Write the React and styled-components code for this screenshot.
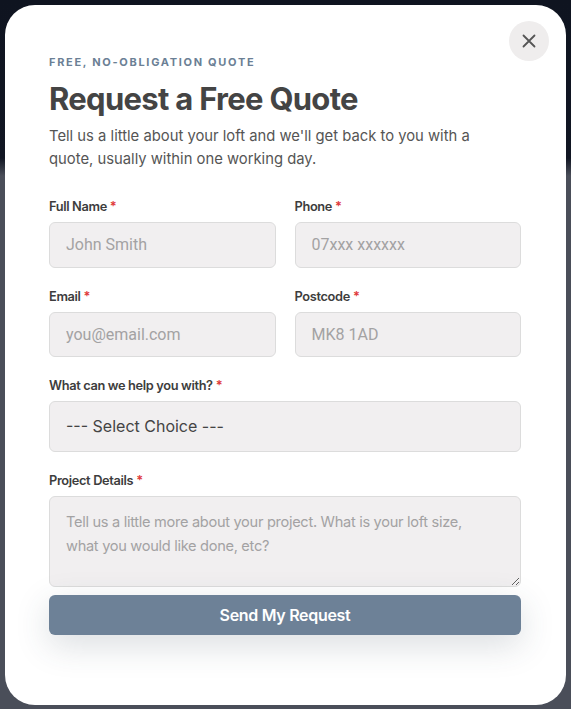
import React from "react";
import styled, { createGlobalStyle } from "styled-components";

const GlobalStyle = createGlobalStyle`
  html, body {
    margin: 0;
    height: 100%;
  }
  body {
    font-family: Inter, "Liberation Sans", sans-serif;
    background: linear-gradient(
      to bottom,
      #0f1420 0,
      #111623 158px,
      #4a4e59 176px,
      #4a4e59 100%
    );
  }
  * { box-sizing: border-box; }
`;

const Overlay = styled.div`
  height: 709px;
  display: flex;
  align-items: center;
  justify-content: center;
`;

const Modal = styled.div`
  position: relative;
  width: 561px;
  height: 700px;
  background: #fff;
  border-radius: 30px;
  padding: 50px 45px 0 44px;
  display: flex;
  flex-direction: column;
  overflow: hidden;
`;

const CloseButton = styled.button`
  position: absolute;
  top: 16px;
  right: 17px;
  width: 40px;
  height: 40px;
  border-radius: 50%;
  border: none;
  background: #efeded;
  display: flex;
  align-items: center;
  justify-content: center;
  padding: 0;
  cursor: pointer;
`;

const Eyebrow = styled.p`
  margin: 0;
  font-size: 11px;
  font-weight: 700;
  letter-spacing: 1.7px;
  color: #6b7f95;
  text-transform: uppercase;
  line-height: 14px;
`;

const Title = styled.h2`
  margin: 11px 0 0;
  font-size: 31px;
  font-weight: 700;
  letter-spacing: -0.7px;
  color: #444;
  line-height: 38px;
`;

const Intro = styled.p`
  margin: 7px 0 0;
  font-size: 14.8px;
  line-height: 23px;
  color: #555;
  max-width: 440px;
`;

const Form = styled.form`
  margin-top: 29px;
  display: flex;
  flex-direction: column;
  gap: 22px;
`;

const Row = styled.div`
  display: grid;
  grid-template-columns: 1fr 1fr;
  gap: 19px;
`;

const Field = styled.div`
  display: flex;
  flex-direction: column;
  gap: 8px;
`;

const Label = styled.label`
  font-size: 12.8px;
  font-weight: 600;
  letter-spacing: -0.35px;
  color: #3d3d3d;
  line-height: 14px;
`;

const Star = styled.span`
  color: #e03b3b;
  margin-left: 3px;
`;

const fieldBase = `
  width: 100%;
  background: #f1eff0;
  border: 1px solid #dcdcdc;
  border-radius: 6px;
  padding: 0 16px;
  font-size: 16px;
  outline: none;
`;

const Input = styled.input`
  ${fieldBase}
  height: ${(p) => p.$h || 46}px;
  font-family: Roboto, "Liberation Sans", sans-serif;
  color: #444;
  &::placeholder { color: #a3a2a3; }
`;

const Select = styled.div`
  ${fieldBase}
  height: 51px;
  display: flex;
  align-items: center;
  font-family: Inter, "Liberation Sans", sans-serif;
  color: #444;
`;

const TextArea = styled.textarea`
  ${fieldBase}
  height: 91px;
  padding: 13px 32px 13px 16px;
  font-family: Inter, "Liberation Sans", sans-serif;
  font-size: 14.6px;
  letter-spacing: -0.3px;
  line-height: 24px;
  resize: vertical;
  &::placeholder { color: #a3a2a3; }
`;

const Footer = styled.div`
  padding-top: 8px;
`;

const Submit = styled.button`
  width: 100%;
  height: 40px;
  border: none;
  border-radius: 6px;
  background: #6d8197;
  color: #fff;
  font-family: Inter, "Liberation Sans", sans-serif;
  font-size: 16px;
  font-weight: 600;
  letter-spacing: -0.3px;
  box-shadow: 0 10px 34px rgba(50, 65, 85, 0.18);
  cursor: pointer;
`;

const Req = () => <Star>*</Star>;

export default function App() {
  return (
    <>
      <GlobalStyle />
      <Overlay>
        <Modal>
          <CloseButton aria-label="Close">
            <svg width="14" height="14" viewBox="0 0 14 14">
              <path d="M1.5 1.5 L12.5 12.5 M12.5 1.5 L1.5 12.5" stroke="#555" strokeWidth="1.8" strokeLinecap="round" />
            </svg>
          </CloseButton>
          <Eyebrow>Free, no-obligation quote</Eyebrow>
          <Title>Request a Free Quote</Title>
          <Intro>
            Tell us a little about your loft and we'll get back to you with a
            quote, usually within one working day.
          </Intro>
          <Form onSubmit={(e) => e.preventDefault()}>
            <Row>
              <Field>
                <Label>Full Name<Req /></Label>
                <Input placeholder="John Smith" />
              </Field>
              <Field>
                <Label>Phone<Req /></Label>
                <Input placeholder="07xxx xxxxxx" />
              </Field>
            </Row>
            <Row>
              <Field>
                <Label>Email<Req /></Label>
                <Input $h={45} placeholder="you@email.com" />
              </Field>
              <Field>
                <Label>Postcode<Req /></Label>
                <Input $h={45} placeholder="MK8 1AD" />
              </Field>
            </Row>
            <Field>
              <Label>What can we help you with?<Req /></Label>
              <Select>--- Select Choice ---</Select>
            </Field>
            <Field>
              <Label>Project Details<Req /></Label>
              <TextArea placeholder="Tell us a little more about your project. What is your loft size, what you would like done, etc?" />
            </Field>
          </Form>
          <Footer>
            <Submit type="submit">Send My Request</Submit>
          </Footer>
        </Modal>
      </Overlay>
    </>
  );
}
